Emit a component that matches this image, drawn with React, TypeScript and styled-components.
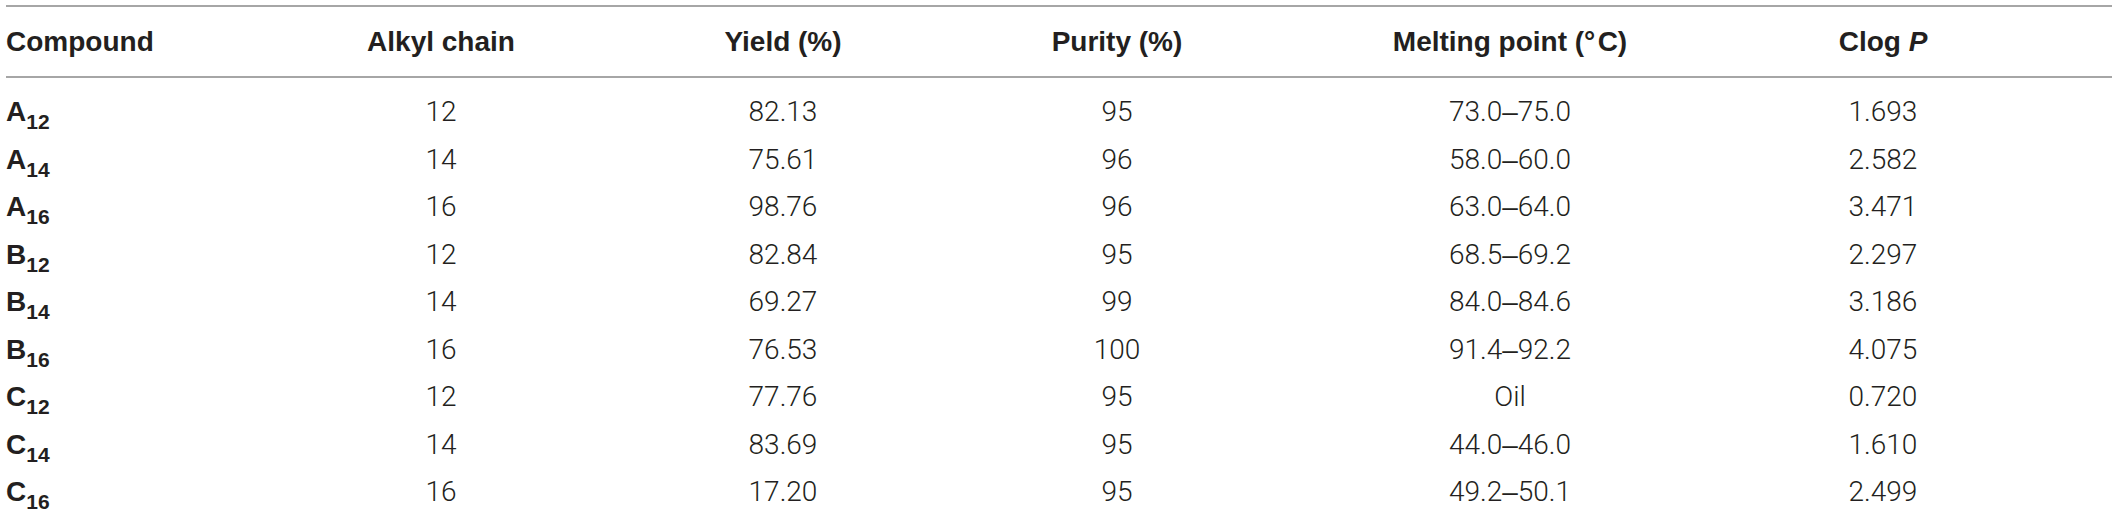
import React from "react";
import styled, { createGlobalStyle } from "styled-components";

const Global = createGlobalStyle`
  html, body { margin: 0; padding: 0; background: #ffffff; }
  body { font-family: "Liberation Sans", Arial, sans-serif; }
`;

const Page = styled.div`
  padding: 5px 0 0 6px;
  width: 2106px;
`;

const Table = styled.table`
  width: 2106px;
  border-collapse: collapse;
  table-layout: fixed;
  font-family: "Liberation Sans", Arial, sans-serif;
  font-size: 28px;
  color: #231f20;
  border-top: 2px solid #a6a6a6;
`;

const Head = styled.thead`
  border-bottom: 2px solid #a6a6a6;
`;

const HeadCell = styled.th<{ $align?: "left" | "center" }>`
  height: 69px;
  padding: 0;
  font-weight: 700;
  line-height: 32px;
  text-align: ${(p) => p.$align ?? "center"};
  vertical-align: middle;
  white-space: nowrap;
`;

const Body = styled.tbody`
  tr:first-child td { padding-top: 10px; }
`;

const Cell = styled.td<{ $align?: "left" | "center"; $bold?: boolean }>`
  padding: 0;
  height: 47.5px;
  line-height: 47.5px;
  text-align: ${(p) => p.$align ?? "center"};
  font-family: ${(p) =>
    p.$bold ? `"Liberation Sans", Arial, sans-serif` : `Roboto, "Liberation Sans", Arial, sans-serif`};
  font-weight: ${(p) => (p.$bold ? 700 : 300)};
  color: #231f20;
  white-space: nowrap;
`;

const Dash = styled.span`
  font-family: "Liberation Sans", Arial, sans-serif;
  font-weight: 400;
`;

const Sub = styled.sub`
  font-size: 21px;
  line-height: 1;
  vertical-align: -8px;
`;

const Italic = styled.i`
  font-style: italic;
`;

const widths = [274, 322, 362, 306, 480, 266];

const rows: [string, string, string, string, string, string, string][] = [
  ["A", "12", "12", "82.13", "95", "73.0–75.0", "1.693"],
  ["A", "14", "14", "75.61", "96", "58.0–60.0", "2.582"],
  ["A", "16", "16", "98.76", "96", "63.0–64.0", "3.471"],
  ["B", "12", "12", "82.84", "95", "68.5–69.2", "2.297"],
  ["B", "14", "14", "69.27", "99", "84.0–84.6", "3.186"],
  ["B", "16", "16", "76.53", "100", "91.4–92.2", "4.075"],
  ["C", "12", "12", "77.76", "95", "Oil", "0.720"],
  ["C", "14", "14", "83.69", "95", "44.0–46.0", "1.610"],
  ["C", "16", "16", "17.20", "95", "49.2–50.1", "2.499"],
];

function Range({ value }: { value: string }) {
  const parts = value.split("–");
  if (parts.length < 2) return <>{value}</>;
  return (
    <>
      {parts[0]}
      <Dash>–</Dash>
      {parts[1]}
    </>
  );
}

export default function App() {
  return (
    <Page>
      <Global />
      <Table>
        <colgroup>
          {widths.map((w, i) => (
            <col key={i} style={{ width: w }} />
          ))}
          <col />
        </colgroup>
        <Head>
          <tr>
            <HeadCell $align="left">Compound</HeadCell>
            <HeadCell>Alkyl chain</HeadCell>
            <HeadCell>Yield (%)</HeadCell>
            <HeadCell>Purity (%)</HeadCell>
            <HeadCell>Melting point (°&#8202;C)</HeadCell>
            <HeadCell>
              Clog <Italic>P</Italic>
            </HeadCell>
            <HeadCell />
          </tr>
        </Head>
        <Body>
          {rows.map((r, i) => (
            <tr key={i}>
              <Cell $align="left" $bold>
                {r[0]}
                <Sub>{r[1]}</Sub>
              </Cell>
              <Cell>{r[2]}</Cell>
              <Cell>{r[3]}</Cell>
              <Cell>{r[4]}</Cell>
              <Cell>
                <Range value={r[5]} />
              </Cell>
              <Cell>{r[6]}</Cell>
              <Cell />
            </tr>
          ))}
        </Body>
      </Table>
    </Page>
  );
}
